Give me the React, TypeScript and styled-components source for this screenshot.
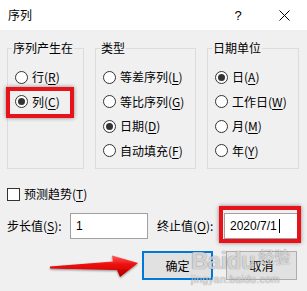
import styled, { createGlobalStyle } from "styled-components";

const GlobalStyle = createGlobalStyle`
  html, body {
    margin: 0;
    background: #f0f0f0;
  }
  body {
    font-family: "Noto Sans CJK SC", "Microsoft YaHei UI", sans-serif;
    font-size: 12px;
    color: #000;
  }
`;

const Dialog = styled.div`
  position: relative;
  width: 307px;
  height: 291px;
  overflow: hidden;
  background: #f0f0f0;
`;

const TitleBar = styled.div`
  display: flex;
  align-items: center;
  height: 30px;
  padding-left: 8px;
  background: #fff;
`;

const Title = styled.span`
  flex: 1;
  line-height: 16px;
`;

const CaptionButton = styled.div`
  display: flex;
  align-items: center;
  justify-content: center;
  width: 46px;
  height: 30px;
  font-family: "Liberation Sans", Arial, sans-serif;
  font-size: 13px;
`;

const Body = styled.div`
  padding: 10px 8px 0 7px;
`;

const Groups = styled.div`
  display: flex;
  gap: 11px;
  align-items: stretch;
`;

const Group = styled.fieldset<{ $w: number }>`
  box-sizing: border-box;
  width: ${(p) => p.$w}px;
  min-width: 0;
  margin: 0;
  padding: 9px 0 5px 4px;
  border: 1px solid #dcdcdc;
`;

const Legend = styled.legend`
  padding: 0 1px;
  line-height: 16px;
`;

const RadioList = styled.div`
  display: flex;
  flex-direction: column;
  padding-left: 3px;
`;

const Option = styled.label`
  position: relative;
  display: flex;
  align-items: center;
  gap: 4px;
  height: 24.5px;
  line-height: 16px;
  white-space: nowrap;
`;

const RadioMark = styled.span<{ $on?: boolean }>`
  box-sizing: border-box;
  display: flex;
  align-items: center;
  justify-content: center;
  width: 13px;
  height: 13px;
  border: 1px solid #333;
  border-radius: 50%;
  background: #fff;
  flex-shrink: 0;
  &::after {
    content: "";
    display: ${(p) => (p.$on ? "block" : "none")};
    width: 7px;
    height: 7px;
    border-radius: 50%;
    background: #333;
  }
`;

const CheckMark = styled.span`
  box-sizing: border-box;
  width: 13px;
  height: 13px;
  border: 1px solid #333;
  background: #fff;
  flex-shrink: 0;
`;

const Key = styled.u`
  text-underline-offset: 2px;
`;

const TrendRow = styled(Option)`
  margin-top: 15px;
  height: 20px;
`;

const FieldRow = styled.div`
  display: flex;
  align-items: center;
  margin-top: 9px;
  height: 26px;
`;

const FieldLabel = styled.span<{ $w: number; $gap?: number }>`
  box-sizing: border-box;
  width: ${(p) => p.$w}px;
  padding-left: ${(p) => p.$gap ?? 0}px;
  line-height: 16px;
  white-space: nowrap;
`;

const TextBox = styled.div<{ $w: number }>`
  position: relative;
  box-sizing: border-box;
  display: flex;
  align-items: center;
  width: ${(p) => p.$w}px;
  height: 26px;
  padding-left: 5px;
  border: 1px solid #a0a0a0;
  background: #fff;
  font-family: "Liberation Sans", Arial, sans-serif;
  font-size: 12px;
`;

const Caret = styled.span`
  display: inline-block;
  width: 1px;
  height: 14px;
  margin-left: 2px;
  background: #000;
`;

const Highlight = styled.div<{ $t: number; $r: number; $b: number; $l: number }>`
  position: absolute;
  top: ${(p) => p.$t}px;
  right: ${(p) => p.$r}px;
  bottom: ${(p) => p.$b}px;
  left: ${(p) => p.$l}px;
  border: 4px solid #e8131a;
  box-shadow: 0 0 4px rgba(0, 0, 0, 0.45);
  pointer-events: none;
`;

const ButtonRow = styled.div`
  display: flex;
  justify-content: flex-end;
  gap: 13px;
  margin-top: 12px;
  padding-right: 2px;
`;

const Button = styled.div<{ $focus?: boolean }>`
  box-sizing: border-box;
  display: flex;
  align-items: center;
  justify-content: center;
  width: 71px;
  height: 29px;
  border: ${(p) => (p.$focus ? "2px solid #0078d7" : "1px solid #adadad")};
  background: #e1e1e1;
  line-height: 16px;
`;

const Overlay = styled.svg`
  position: absolute;
  left: 0;
  top: 0;
  pointer-events: none;
`;

const Watermark = styled.div`
  position: absolute;
  left: 191px;
  top: 246px;
  color: rgba(255, 255, 255, 0.7);
  text-shadow: 0 0 1px rgba(0, 0, 0, 0.3), 0 0 1px rgba(0, 0, 0, 0.3);
  pointer-events: none;
`;

const MarkTop = styled.div`
  display: flex;
  align-items: flex-end;
  gap: 3px;
`;

const MarkLatin = styled.span`
  font-family: "Liberation Sans", Arial, sans-serif;
  font-size: 24px;
  font-weight: bold;
  line-height: 26px;
  letter-spacing: -0.5px;
`;

const MarkCjk = styled.span`
  font-size: 16px;
  line-height: 20px;
  margin-bottom: 8px;
`;

const MarkUrl = styled.div`
  font-family: "Liberation Sans", Arial, sans-serif;
  font-size: 10px;
  line-height: 11px;
  letter-spacing: 0.5px;
`;

type Item = { text: string; ak: string; on?: boolean };

const Radio = ({ text, ak, on }: Item) => (
  <Option>
    <RadioMark $on={on} />
    <span>
      {text}(<Key>{ak}</Key>)
    </span>
  </Option>
);

const types: Item[] = [
  { text: "等差序列", ak: "L" },
  { text: "等比序列", ak: "G" },
  { text: "日期", ak: "D", on: true },
  { text: "自动填充", ak: "F" },
];

const units: Item[] = [
  { text: "日", ak: "A", on: true },
  { text: "工作日", ak: "W" },
  { text: "月", ak: "M" },
  { text: "年", ak: "Y" },
];

export default function App() {
  return (
    <Dialog>
      <GlobalStyle />
      <TitleBar>
        <Title>序列</Title>
        <CaptionButton>?</CaptionButton>
        <CaptionButton>
          <svg width="11" height="11" viewBox="0 0 11 11">
            <path d="M0.5 0.5 L10.5 10.5 M10.5 0.5 L0.5 10.5" stroke="#000" strokeWidth="1" fill="none" />
          </svg>
        </CaptionButton>
      </TitleBar>

      <Body>
        <Groups>
          <Group $w={77}>
            <Legend>序列产生在</Legend>
            <RadioList>
              <Radio text="行" ak="R" />
              <Option>
                <Highlight $t={-2.5} $r={9} $b={-4} $l={-9} />
                <RadioMark $on />
                <span>
                  列(<Key>C</Key>)
                </span>
              </Option>
            </RadioList>
          </Group>
          <Group $w={101}>
            <Legend>类型</Legend>
            <RadioList>
              {types.map((t) => (
                <Radio key={t.ak} {...t} />
              ))}
            </RadioList>
          </Group>
          <Group $w={92}>
            <Legend>日期单位</Legend>
            <RadioList>
              {units.map((t) => (
                <Radio key={t.ak} {...t} />
              ))}
            </RadioList>
          </Group>
        </Groups>

        <TrendRow>
          <CheckMark />
          <span>
            预测趋势(<Key>T</Key>)
          </span>
        </TrendRow>

        <FieldRow>
          <FieldLabel $w={63}>
            步长值(<Key>S</Key>):
          </FieldLabel>
          <TextBox $w={78}>1</TextBox>
          <FieldLabel $w={76} $gap={9}>
            终止值(<Key>O</Key>):
          </FieldLabel>
          <TextBox $w={75}>
            2020/7/1
            <Caret />
            <Highlight $t={-8} $r={-3} $b={-5} $l={-6} />
          </TextBox>
        </FieldRow>

        <ButtonRow>
          <Button $focus>确定</Button>
          <Button>取消</Button>
        </ButtonRow>
      </Body>

      <Overlay width="307" height="291" viewBox="0 0 307 291">
        <defs>
          <linearGradient id="arrowFill" x1="0" y1="0" x2="0" y2="1">
            <stop offset="0" stopColor="#ff5a5a" />
            <stop offset="0.45" stopColor="#ee0a0a" />
            <stop offset="1" stopColor="#a80000" />
          </linearGradient>
          <filter id="arrowShadow" x="-10%" y="-30%" width="120%" height="160%">
            <feDropShadow dx="0" dy="1" stdDeviation="1.2" floodColor="#000" floodOpacity="0.45" />
          </filter>
        </defs>
        <polygon
          points="50,266.5 113,261.5 112,255.5 138,263 120,277 117,270 50,268.5"
          fill="url(#arrowFill)"
          filter="url(#arrowShadow)"
        />
      </Overlay>

      <Watermark>
        <MarkTop>
          <MarkLatin>Baidu</MarkLatin>
          <MarkCjk>经验</MarkCjk>
        </MarkTop>
        <MarkUrl>jingyan.baidu.com</MarkUrl>
      </Watermark>
    </Dialog>
  );
}
